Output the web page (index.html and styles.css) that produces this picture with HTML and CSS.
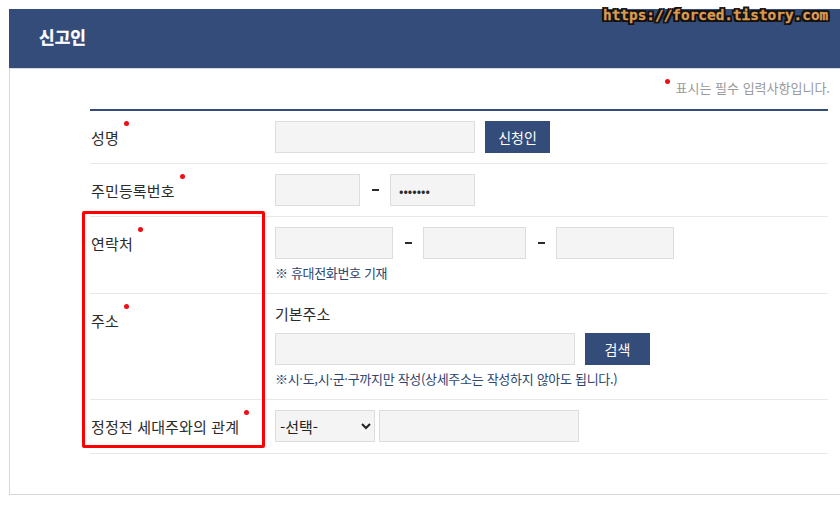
FILE: index.html
```html
<!DOCTYPE html>
<html lang="ko">
<head>
<meta charset="utf-8">
<title>신고인</title>
<link rel="stylesheet" href="styles.css">
</head>
<body>
<section class="panel">
  <h2 class="panel-title">신고인</h2>
  <div class="panel-body">
    <p class="req-note"><i class="dot dot-note"></i>표시는 필수 입력사항입니다.</p>
    <div class="form">
      <div class="row">
        <div class="label"><span class="label-text">성명<i class="dot"></i></span></div>
        <div class="field line">
          <input class="input w200" type="text">
          <button class="btn" type="button">신청인</button>
        </div>
      </div>
      <div class="row">
        <div class="label"><span class="label-text">주민등록번호<i class="dot"></i></span></div>
        <div class="field line">
          <input class="input w85" type="text">
          <span class="dash"></span>
          <input class="input w85" type="password" value="1234567">
        </div>
      </div>
      <div class="row">
        <div class="label"><span class="label-text">연락처<i class="dot"></i></span></div>
        <div class="field">
          <div class="line">
            <input class="input w118" type="text">
            <span class="dash"></span>
            <input class="input w103" type="text">
            <span class="dash"></span>
            <input class="input w118" type="text">
          </div>
          <p class="hint hint-phone">※ 휴대전화번호 기재</p>
        </div>
      </div>
      <div class="row">
        <div class="label"><span class="label-text">주소<i class="dot"></i></span></div>
        <div class="field">
          <div class="sub-label">기본주소</div>
          <div class="line">
            <input class="input w300" type="text">
            <button class="btn" type="button">검색</button>
          </div>
          <p class="hint hint-addr">※시·도,시·군·구까지만 작성(상세주소는 작성하지 않아도 됩니다.)</p>
        </div>
      </div>
      <div class="row row-last">
        <div class="label"><span class="label-text">정정전 세대주와의 관계<i class="dot"></i></span></div>
        <div class="field line">
          <select class="input select"><option>-선택-</option></select>
          <input class="input w200" type="text">
        </div>
      </div>
    </div>
  </div>
</section>
<div class="highlight"></div>
<div class="watermark">https://forced.tistory.com</div>
</body>
</html>
```

FILE: styles.css
```css
* { box-sizing: border-box; }
html, body { margin: 0; padding: 0; }
body {
  width: 840px;
  height: 510px;
  overflow: hidden;
  position: relative;
  background: #fff;
  padding: 9px 0 0 9px;
  font-family: "Noto Sans CJK KR", "Noto Sans", sans-serif;
  color: #2b2b2b;
}
.panel { width: 860px; }
.panel-title {
  margin: 0;
  height: 59px;
  padding-left: 30px;
  background: #334c79;
  color: #fff;
  font-size: 17px;
  font-weight: 700;
  line-height: 55px;
  -webkit-text-stroke: 0.3px #fff;
}
.panel-body {
  height: 427px;
  border: 1px solid #d8d8d8;
  padding: 0 0 0 80px;
}
.req-note {
  position: relative;
  width: 740px;
  margin: 0;
  height: 40px;
  padding-top: 9px;
  text-align: right;
  font-size: 13px;
  line-height: 20px;
  color: #999;
}
.dot {
  position: absolute;
  right: -10px;
  top: -7px;
  width: 5px;
  height: 5px;
  border-radius: 50%;
  background: #f20d14;
}
.dot-note { right: 160px; top: 10px; }
.form { width: 738px; border-top: 2px solid #334c79; }
.row { display: flex; border-bottom: 1px solid #e8e8e8; }
.row-last { padding-bottom: 1px; }
.label {
  width: 185px;
  flex: none;
  font-size: 15px;
  letter-spacing: 0.15px;
  line-height: 20px;
  padding: 17px 0 0 1px;
}
.label-text { position: relative; display: inline-block; }
.field { padding: 10px 0; }
.line { display: flex; align-items: center; }
.input {
  height: 32px;
  border: 1px solid #ddd;
  background: #f4f4f4;
  border-radius: 0;
  padding: 0 8px;
  margin: 0;
  font-size: 13px;
  font-family: inherit;
  color: #2b2b2b;
}
.w200 { width: 200px; }
.w85 { width: 85px; }
.w118 { width: 118px; }
.w103 { width: 103px; }
.w300 { width: 300px; }
.select { width: 100px; font-size: 15px; margin-right: 4px; padding: 0; color: #222; }
.dash { width: 30px; display: flex; justify-content: center; }
.dash::before { content: ""; width: 7px; height: 2px; background: #2b2b2b; }
.btn {
  width: 65px;
  height: 32px;
  margin-left: 10px;
  border: 0;
  padding: 0;
  background: #334c79;
  color: #fff;
  font-family: inherit;
  font-size: 14px;
}
.hint { margin: 4px 0 0; font-size: 13px; line-height: 20px; color: #2d4570; }
.hint-phone { letter-spacing: -0.35px; }
.hint-addr { letter-spacing: -0.3px; }
.sub-label { font-size: 15px; font-weight: 400; line-height: 20px; margin-bottom: 9px; }
.highlight {
  position: absolute;
  left: 82px;
  top: 211px;
  width: 183px;
  height: 237px;
  border: 3px solid #f00;
  border-radius: 2px;
}
.watermark {
  position: absolute;
  left: 603px;
  top: 6px;
  font-family: "DejaVu Sans Mono", monospace;
  font-size: 14.4px;
  font-weight: 700;
  line-height: 19px;
  color: #dc9a50;
  -webkit-text-stroke: 0.3px #dc9a50;
  text-shadow: 1px 0 #111, -1px 0 #111, 0 1px #111, 0 -1px #111, 2px 0 #111, -2px 0 #111, 0 2px #111, 0 -2px #111, 1px 1px #111, -1px -1px #111, 1px -1px #111, -1px 1px #111, 2px 2px #111, -2px -2px #111, 2px -2px #111, -2px 2px #111;
}
```
